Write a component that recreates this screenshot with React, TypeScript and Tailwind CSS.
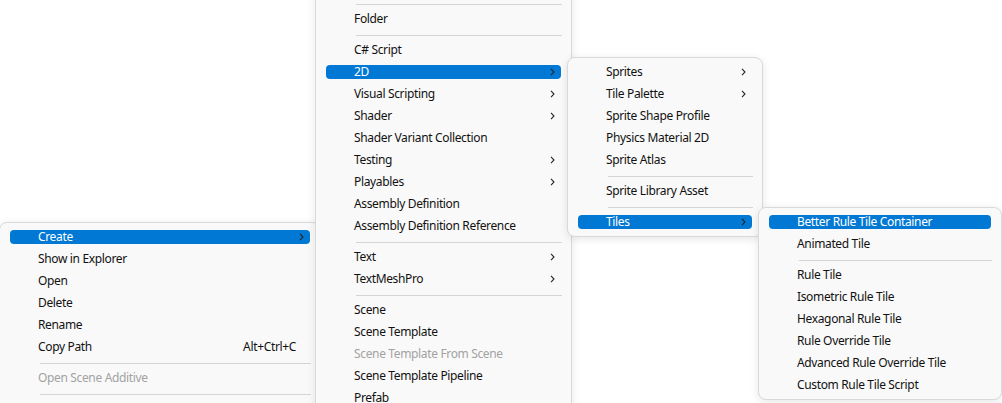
import React from 'react';

type Item =
  | { sep: true }
  | { label: string; sub?: boolean; shortcut?: string; disabled?: boolean; active?: boolean; sep?: false };

const SEP: Item = { sep: true };

const projectMenu: Item[] = [
  { label: 'Create', sub: true, active: true },
  { label: 'Show in Explorer' },
  { label: 'Open' },
  { label: 'Delete' },
  { label: 'Rename' },
  { label: 'Copy Path', shortcut: 'Alt+Ctrl+C' },
  SEP,
  { label: 'Open Scene Additive', disabled: true },
  SEP,
];

const createMenu: Item[] = [
  SEP,
  { label: 'Folder' },
  SEP,
  { label: 'C# Script' },
  { label: '2D', sub: true, active: true },
  { label: 'Visual Scripting', sub: true },
  { label: 'Shader', sub: true },
  { label: 'Shader Variant Collection' },
  { label: 'Testing', sub: true },
  { label: 'Playables', sub: true },
  { label: 'Assembly Definition' },
  { label: 'Assembly Definition Reference' },
  SEP,
  { label: 'Text', sub: true },
  { label: 'TextMeshPro', sub: true },
  SEP,
  { label: 'Scene' },
  { label: 'Scene Template' },
  { label: 'Scene Template From Scene', disabled: true },
  { label: 'Scene Template Pipeline' },
  { label: 'Prefab' },
];

const menu2D: Item[] = [
  { label: 'Sprites', sub: true },
  { label: 'Tile Palette', sub: true },
  { label: 'Sprite Shape Profile' },
  { label: 'Physics Material 2D' },
  { label: 'Sprite Atlas' },
  SEP,
  { label: 'Sprite Library Asset' },
  SEP,
  { label: 'Tiles', sub: true, active: true },
];

const tilesMenu: Item[] = [
  { label: 'Better Rule Tile Container', active: true },
  { label: 'Animated Tile' },
  SEP,
  { label: 'Rule Tile' },
  { label: 'Isometric Rule Tile' },
  { label: 'Hexagonal Rule Tile' },
  { label: 'Rule Override Tile' },
  { label: 'Advanced Rule Override Tile' },
  { label: 'Custom Rule Tile Script' },
];

function Chevron() {
  return (
    <svg width="5" height="8" viewBox="0 0 5 8" className="block">
      <path d="M1 0.8 L4 4 L1 7.2" fill="none" stroke="#262626" strokeWidth="1.1" />
    </svg>
  );
}

function Menu({ items, className }: { items: Item[]; className: string }) {
  return (
    <div
      className={`absolute rounded-[8px] border border-[#d9d9d9] bg-[#f9f9f9] py-[3px] shadow-[0_2px_8px_rgba(0,0,0,0.10)] ${className}`}
    >
      {items.map((it, i) =>
        it.sep ? (
          <div key={i} className="h-[9px] pt-[5px] pl-[40px] pr-[9px]">
            <div className="h-px bg-[#d5d5d5]" />
          </div>
        ) : (
          <div key={i} className="h-[22px] px-[10px] py-[4px]">
            <div
              className={`flex h-[14px] items-center rounded-[4px] pl-[28px] pr-[6px] text-[12px] leading-[14px] tracking-[-0.35px] ${
                it.active ? 'bg-[#0078d4] text-white' : it.disabled ? 'text-[#a2a2a2]' : 'text-[#111]'
              }`}
            >
              <span className="flex-1 whitespace-nowrap">{it.label}</span>
              {it.shortcut && <span className="whitespace-nowrap">{it.shortcut}</span>}
              <span className="flex w-[8px] justify-end">{it.sub && <Chevron />}</span>
            </div>
          </div>
        ),
      )}
    </div>
  );
}

export default function App() {
  return (
    <div
      className="relative h-[403px] w-[1002px] overflow-hidden bg-white"
      style={{ fontFamily: '"Segoe UI", "Noto Sans", sans-serif' }}
    >
      <Menu items={projectMenu} className="left-[-1px] top-[222px] w-[322px] pb-[40px]" />
      <Menu items={createMenu} className="left-[315px] top-[-12px] w-[257px] pt-[10px]" />
      <Menu items={menu2D} className="left-[567px] top-[57px] w-[196px]" />
      <Menu items={tilesMenu} className="left-[758px] top-[207px] w-[244px]" />
    </div>
  );
}
